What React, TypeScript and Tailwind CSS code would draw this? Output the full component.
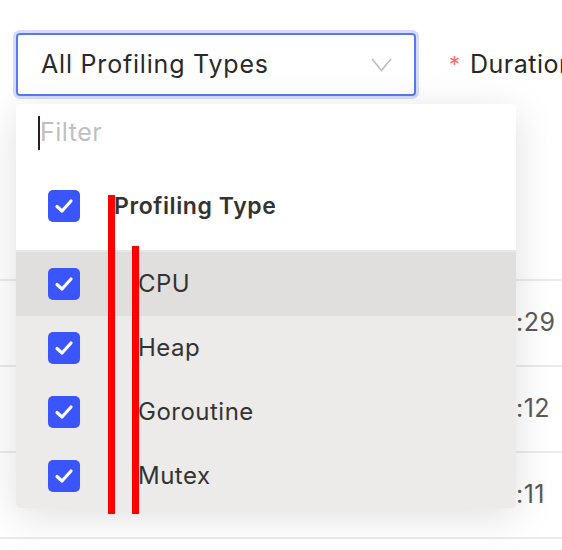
import React from "react";

const Check = () => (
  <div className="flex h-[32px] w-[32px] items-center justify-center rounded-[5px] bg-[#3955fb]">
    <svg width="20" height="16" viewBox="0 0 20 16" fill="none">
      <polyline points="3,8.5 8,13 17,3" stroke="white" strokeWidth="3.2" strokeLinecap="round" strokeLinejoin="round" />
    </svg>
  </div>
);

export default function App() {
  const items = ["CPU", "Heap", "Goroutine", "Mutex"];
  return (
    <div
      className="relative h-[550px] w-[562px] overflow-hidden bg-white"
      style={{ fontFamily: "Inter, 'Noto Sans', sans-serif" }}
    >
      {/* background page */}
      <div className="flex items-center pt-[33px]">
        <div className="ml-[16px] flex h-[63px] w-[400px] shrink-0 items-center justify-between rounded-[4px] border-2 border-[#5a78f0] pl-[23px] pr-[22px] shadow-[0_0_0_3px_#d5dcfd]">
          <span className="text-[25px] tracking-[0.8px] text-[#2a2a2a]">All Profiling Types</span>
          <svg width="21" height="14" viewBox="0 0 21 14" fill="none">
            <polyline points="1,1 10.5,12.5 20,1" stroke="#bdbdbd" strokeWidth="1.6" />
          </svg>
        </div>
        <div className="ml-[33px] flex shrink-0 items-center whitespace-nowrap">
          <span className="mr-[10px] text-[22px] text-[#ff6b6b]">*</span>
          <span className="text-[25px] tracking-[0.5px] text-[#262626]">Duration</span>
        </div>
      </div>
      <div className="mt-[183px]">
        {[":29", ":12", ":11"].map((t) => (
          <div key={t} className="flex h-[86px] items-center border-t-2 border-[#ebebeb] pl-[516px]">
            <span className="text-[25px] tracking-[0.5px] text-[#5a5a5a]">{t}</span>
          </div>
        ))}
        <div className="h-[86px] border-t-2 border-[#ebebeb]" />
      </div>

      {/* dropdown panel */}
      <div className="absolute left-[16px] top-[104px] w-[500px] overflow-hidden rounded-[4px] bg-white shadow-[0_8px_40px_rgba(0,0,0,0.13)]">
        <div className="flex h-[58px] items-center pl-[22px]">
          <div className="h-[34px] w-[2px] bg-[#222]" />
          <span className="text-[25px] tracking-[0.5px] text-[#bfbfbf]">Filter</span>
        </div>
        <div className="flex h-[88px] items-center pl-[32px]">
          <Check />
          <span className="ml-[34px] text-[23px] font-semibold tracking-[0.6px] text-[#333]">Profiling Type</span>
        </div>
        <div className="h-[2px] bg-[#e9e8e6]" />
        {items.map((it, i) => (
          <div
            key={it}
            className={`flex h-[64px] items-center pl-[32px] ${i === 0 ? "bg-[#e0dfdd]" : "bg-[#ecebe9]"}`}
          >
            <Check />
            <span className="ml-[58px] text-[24px] tracking-[0.5px] text-[#333]">{it}</span>
          </div>
        ))}
      </div>

      {/* red annotation bars */}
      <div className="absolute left-[108px] top-[195px] h-[319px] w-[7px] bg-[#ff0000]" />
      <div className="absolute left-[132px] top-[246px] h-[268px] w-[7px] bg-[#ff0000]" />
    </div>
  );
}
